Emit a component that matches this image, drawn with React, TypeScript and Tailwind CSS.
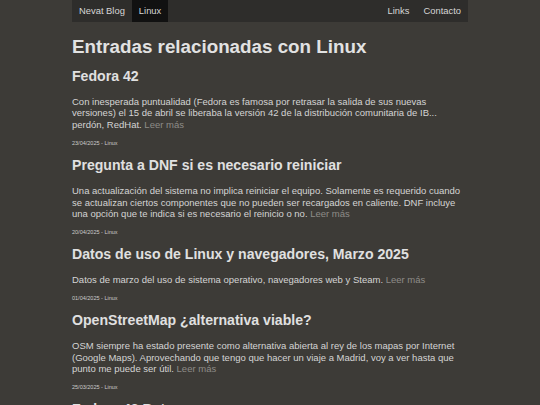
import React from 'react';

type Post = {
  title: string;
  excerpt: string;
  date: string;
};

const posts: Post[] = [
  {
    title: 'Fedora 42',
    excerpt:
      'Con inesperada puntualidad (Fedora es famosa por retrasar la salida de sus nuevas versiones) el 15 de abril se liberaba la versión 42 de la distribución comunitaria de IB... perdón, RedHat.',
    date: '23/04/2025',
  },
  {
    title: 'Pregunta a DNF si es necesario reiniciar',
    excerpt:
      'Una actualización del sistema no implica reiniciar el equipo. Solamente es requerido cuando se actualizan ciertos componentes que no pueden ser recargados en caliente. DNF incluye una opción que te indica si es necesario el reinicio o no.',
    date: '20/04/2025',
  },
  {
    title: 'Datos de uso de Linux y navegadores, Marzo 2025',
    excerpt: 'Datos de marzo del uso de sistema operativo, navegadores web y Steam.',
    date: '01/04/2025',
  },
  {
    title: 'OpenStreetMap ¿alternativa viable?',
    excerpt:
      'OSM siempre ha estado presente como alternativa abierta al rey de los mapas por Internet (Google Maps). Aprovechando que tengo que hacer un viaje a Madrid, voy a ver hasta que punto me puede ser útil.',
    date: '25/03/2025',
  },
  {
    title: 'Fedora 42 Beta',
    excerpt: 'Ya está disponible la versión beta de Fedora 42.',
    date: '15/03/2025',
  },
];

const NavBar: React.FC = () => (
  <nav className="flex h-[22px] items-stretch justify-between bg-[#2e2d2b] text-[9.4px] text-[#d6d6d6]">
    <div className="flex">
      <a className="flex items-center px-[7px]">Nevat Blog</a>
      <a className="flex items-center bg-[#111111] px-[7px]">Linux</a>
    </div>
    <div className="flex">
      <a className="flex items-center px-[7px]">Links</a>
      <a className="flex items-center px-[7px]">Contacto</a>
    </div>
  </nav>
);

const PostItem: React.FC<{ post: Post }> = ({ post }) => (
  <article>
    <h2 className="mt-[10px] text-[14.1px] font-bold leading-[17px] text-[#e0e0e0]">{post.title}</h2>
    <p className="mt-[11px] text-[9.5px] leading-[11.75px] text-[#d4d4d4]">
      {post.excerpt} <a className="text-[#8e8c88]">Leer más</a>
    </p>
    <div className="mt-[9px] text-[5.5px] leading-[7px] text-[#cccccc]">{post.date} - Linux</div>
  </article>
);

export default function App() {
  return (
    <div
      className="min-h-[405px] bg-[#3d3b37]"
      style={{ fontFamily: '"Liberation Sans", Arial, sans-serif' }}
    >
      <div className="mx-auto w-[396px]">
        <NavBar />
        <main>
          <h1 className="mt-[13.5px] text-[18.8px] font-bold leading-[22px] text-[#e2e2e2]">
            Entradas relacionadas con Linux
          </h1>
          {posts.map((post) => (
            <PostItem key={post.date} post={post} />
          ))}
        </main>
      </div>
    </div>
  );
}
